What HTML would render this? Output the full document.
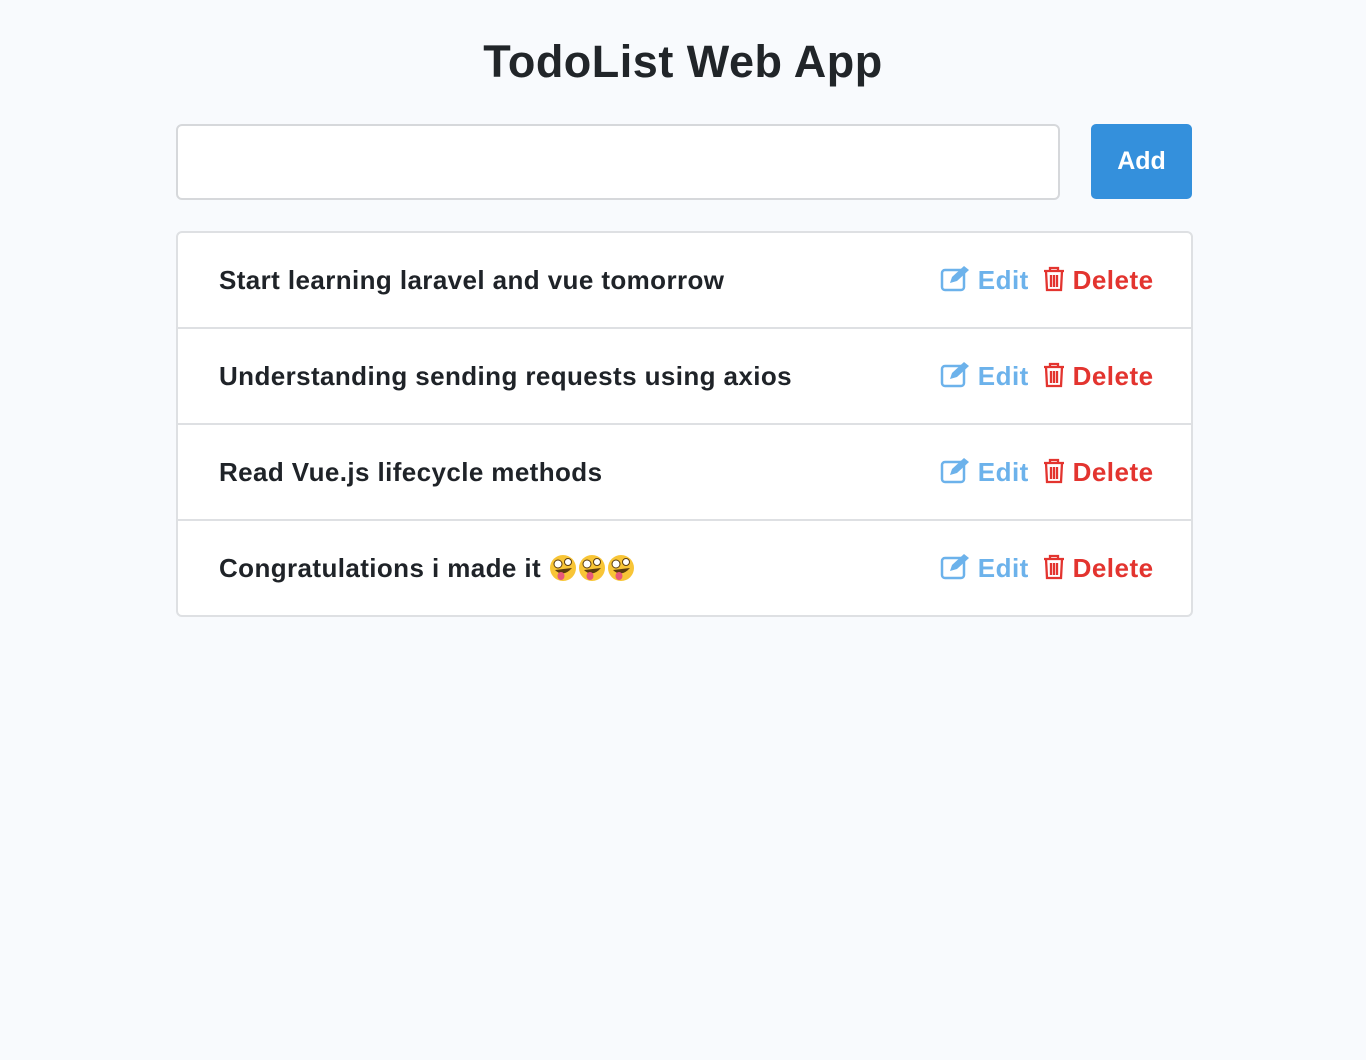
<!DOCTYPE html>
<html><head><style>
body{margin:0;background:#f8fafd;font-family:"Liberation Sans",sans-serif;color:#212529;}
h1{position:absolute;top:36px;left:0;width:1366px;text-align:center;margin:0;font-size:45px;font-weight:bold;letter-spacing:0.5px}
.inp{position:absolute;left:176px;top:124px;width:880px;height:72px;border:2px solid #d6d8db;border-radius:6px;background:#fff}
.btn{position:absolute;left:1091px;top:124px;width:101px;height:75px;background:#3490dc;border-radius:5px;color:#fff;font-size:25px;font-weight:bold;text-align:center;line-height:74px}
.list{position:absolute;left:176px;top:231px;width:1013px;border:2px solid #dee0e3;border-radius:6px;background:#fff}
.row{height:94px;border-top:2px solid #dee0e3;position:relative}
.row:first-child{border-top:none;height:94px}
.t{position:absolute;left:41px;top:32px;font-size:26px;letter-spacing:0.4px;font-weight:bold;color:#1f2328}
.a{position:absolute;left:762px;top:32px;font-size:26px;letter-spacing:0.5px;font-weight:bold;white-space:nowrap}
.e{color:#6cb2eb}.d{color:#e3342f;margin-left:14px}
svg{vertical-align:-3px}
</style></head><body>
<h1>TodoList Web App</h1>
<div class="inp"></div>
<div class="btn">Add</div>
<div class="list">
<div class="row"><div class="t">Start learning laravel and vue tomorrow</div><div class="a"><span class="e"><svg width="30" height="26" viewBox="0 0 30 26"><rect x="2" y="4" width="22" height="20" rx="3" fill="none" stroke="#6cb2eb" stroke-width="2.5"/><path d="M10 17l2-6L24 0l5 4L17 15z" fill="#6cb2eb"/></svg> Edit</span><span class="d"><svg width="22" height="26" viewBox="0 0 22 26"><path d="M1 5h20M7 5V2h8v3M3 5l1 19h14l1-19M8 9v12M11 9v12M14 9v12" fill="none" stroke="#e3342f" stroke-width="2.3"/></svg> Delete</span></div></div>
<div class="row"><div class="t">Understanding sending requests using axios</div><div class="a"><span class="e"><svg width="30" height="26" viewBox="0 0 30 26"><rect x="2" y="4" width="22" height="20" rx="3" fill="none" stroke="#6cb2eb" stroke-width="2.5"/><path d="M10 17l2-6L24 0l5 4L17 15z" fill="#6cb2eb"/></svg> Edit</span><span class="d"><svg width="22" height="26" viewBox="0 0 22 26"><path d="M1 5h20M7 5V2h8v3M3 5l1 19h14l1-19M8 9v12M11 9v12M14 9v12" fill="none" stroke="#e3342f" stroke-width="2.3"/></svg> Delete</span></div></div>
<div class="row"><div class="t">Read Vue.js lifecycle methods</div><div class="a"><span class="e"><svg width="30" height="26" viewBox="0 0 30 26"><rect x="2" y="4" width="22" height="20" rx="3" fill="none" stroke="#6cb2eb" stroke-width="2.5"/><path d="M10 17l2-6L24 0l5 4L17 15z" fill="#6cb2eb"/></svg> Edit</span><span class="d"><svg width="22" height="26" viewBox="0 0 22 26"><path d="M1 5h20M7 5V2h8v3M3 5l1 19h14l1-19M8 9v12M11 9v12M14 9v12" fill="none" stroke="#e3342f" stroke-width="2.3"/></svg> Delete</span></div></div>
<div class="row"><div class="t">Congratulations i made it <svg width="90" height="28" viewBox="0 0 90 28" style="vertical-align:-5px"><g id="f"><circle cx="14" cy="14" r="13" fill="#f8c537"/><circle cx="9" cy="10" r="4" fill="#fff" stroke="#5a3b0e"/><circle cx="19" cy="8" r="3.5" fill="#fff" stroke="#5a3b0e"/><path d="M6 16q8 8 17-2" fill="#5a3b0e"/><ellipse cx="12" cy="22" rx="3.5" ry="4" fill="#e8577a"/></g><use href="#f" x="29"/><use href="#f" x="58"/></svg></div><div class="a"><span class="e"><svg width="30" height="26" viewBox="0 0 30 26"><rect x="2" y="4" width="22" height="20" rx="3" fill="none" stroke="#6cb2eb" stroke-width="2.5"/><path d="M10 17l2-6L24 0l5 4L17 15z" fill="#6cb2eb"/></svg> Edit</span><span class="d"><svg width="22" height="26" viewBox="0 0 22 26"><path d="M1 5h20M7 5V2h8v3M3 5l1 19h14l1-19M8 9v12M11 9v12M14 9v12" fill="none" stroke="#e3342f" stroke-width="2.3"/></svg> Delete</span></div></div>
</div>
</body></html>
